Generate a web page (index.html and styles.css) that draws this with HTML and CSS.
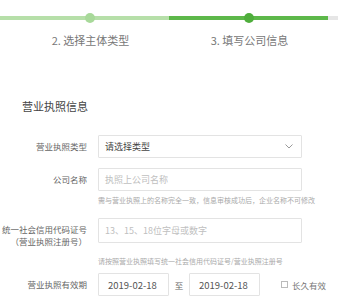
FILE: index.html
```html
<!DOCTYPE html>
<html lang="zh-CN">
<head>
  <meta charset="UTF-8" />
  <title>填写公司信息</title>
  <meta name="viewport" content="width=device-width, initial-scale=1" />
  <link rel="stylesheet" href="styles.css">
</head>
<body>
  <div class="steps-wrap">
    <div class="steps">
      <div class="step done">
        <div class="step-line"><span class="dot"></span></div>
        <div class="step-name"></div>
      </div>
      <div class="step done">
        <div class="step-line"><span class="dot"></span></div>
        <div class="step-name">2. 选择主体类型</div>
      </div>
      <div class="step active">
        <div class="step-line"><span class="dot"></span></div>
        <div class="step-name">3. 填写公司信息</div>
      </div>
      <div class="step">
        <div class="step-line"><span class="dot"></span></div>
        <div class="step-name"></div>
      </div>
    </div>
  </div>

  <h3 class="section-title">营业执照信息</h3>

  <div class="form">
    <div class="row r-type">
      <label class="label">营业执照类型</label>
      <div class="field">
        <div class="box select">
          <span>请选择类型</span>
          <svg class="chevron" width="8" height="5" viewBox="0 0 8 5"><polyline points="0.5,0.5 4,4 7.5,0.5" fill="none" stroke="#999" stroke-width="1"/></svg>
        </div>
      </div>
    </div>

    <div class="row r-name">
      <label class="label">公司名称</label>
      <div class="field">
        <div class="box placeholder">执照上公司名称</div>
        <p class="hint">需与营业执照上的名称完全一致，信息审核成功后，企业名称不可修改</p>
      </div>
    </div>

    <div class="row r-code">
      <label class="label">统一社会信用代码证号<br>（营业执照注册号）</label>
      <div class="field">
        <div class="box placeholder tall">13、15、18位字母或数字</div>
        <p class="hint">请按照营业执照填写统一社会信用代码证号/营业执照注册号</p>
      </div>
    </div>

    <div class="row r-date">
      <label class="label">营业执照有效期</label>
      <div class="field dates">
        <div class="box date">2019-02-18</div>
        <span class="to">至</span>
        <div class="box date">2019-02-18</div>
        <span class="forever"><i class="check"></i>长久有效</span>
      </div>
    </div>
  </div>
</body>
</html>
```

FILE: styles.css
```css
body {
  margin: 0;
  background: #fff;
  font-family: "Noto Sans CJK SC", "Noto Sans", sans-serif;
  color: #333;
  overflow: hidden;
}

/* 步骤条 */
.steps-wrap {
  overflow: hidden;
}
.steps {
  display: flex;
  margin-left: -149px;
  padding-top: 13px;
}
.step {
  flex: 0 0 159px;
  display: flex;
  flex-direction: column;
  align-items: center;
}
.step-line {
  width: 100%;
  height: 10px;
  display: flex;
  align-items: center;
  justify-content: center;
  background: linear-gradient(#e6e6e6, #e6e6e6) center / 100% 4px no-repeat;
}
.dot {
  width: 10px;
  height: 10px;
  border-radius: 50%;
  background: #e0e0e0;
}
.step.done .step-line {
  background: linear-gradient(#b6dfa9, #b6dfa9) center / 100% 4px no-repeat;
}
.step.done .dot { background: #a8d99a; }
.step.active .step-line {
  background: linear-gradient(#5db84a, #5db84a) center / 100% 4px no-repeat;
}
.step.active .dot { background: #4fae3c; }
.step-name {
  margin-top: 9px;
  height: 16px;
  font-size: 11px;
  line-height: 16px;
  color: #777;
  padding-left: 2px;
}

.section-title {
  margin: 50px 0 0 22px;
  font-size: 11px;
  line-height: 16px;
  font-weight: normal;
  color: #444;
}

/* 表单 */
.form {
  margin-top: 21px;
}
.row {
  display: grid;
  grid-template-columns: 87px 204px;
  column-gap: 11px;
}
.label {
  text-align: right;
  font-size: 8.5px;
  line-height: 12px;
  color: #666;
  padding-top: 5px;
  white-space: nowrap;
}
.box {
  box-sizing: border-box;
  height: 23px;
  border: 1px solid #e3e3e3;
  border-radius: 1px;
  padding: 0 6px;
  display: flex;
  align-items: center;
  font-size: 9px;
  color: #444;
}
.box.tall { height: 25px; }
.placeholder { color: #c0c0c0; }
.select { justify-content: space-between; padding-right: 8px; }
.hint {
  margin: 4px 0 0;
  font-size: 7px;
  line-height: 10px;
  color: #aaa;
  white-space: nowrap;
}

.r-name { margin-top: 10px; }
.r-code { margin-top: 13px; }
.r-code .label { padding-top: 5px; }
.r-code .hint { margin-top: 13px; }
.r-date { margin-top: 7px; }

.dates {
  display: flex;
  align-items: center;
  white-space: nowrap;
}
.box.date {
  flex: 0 0 71px;
  padding-left: 9px;
  font-size: 9.5px;
  color: #555;
}
.to {
  flex: 0 0 20px;
  text-align: center;
  font-size: 8.5px;
  color: #666;
}
.forever {
  flex: 0 0 auto;
  margin-left: 21px;
  display: flex;
  align-items: center;
  font-size: 8.5px;
  color: #777;
}
.check {
  width: 5px;
  height: 5px;
  border: 1px solid #bbb;
  margin-right: 4px;
}
```
